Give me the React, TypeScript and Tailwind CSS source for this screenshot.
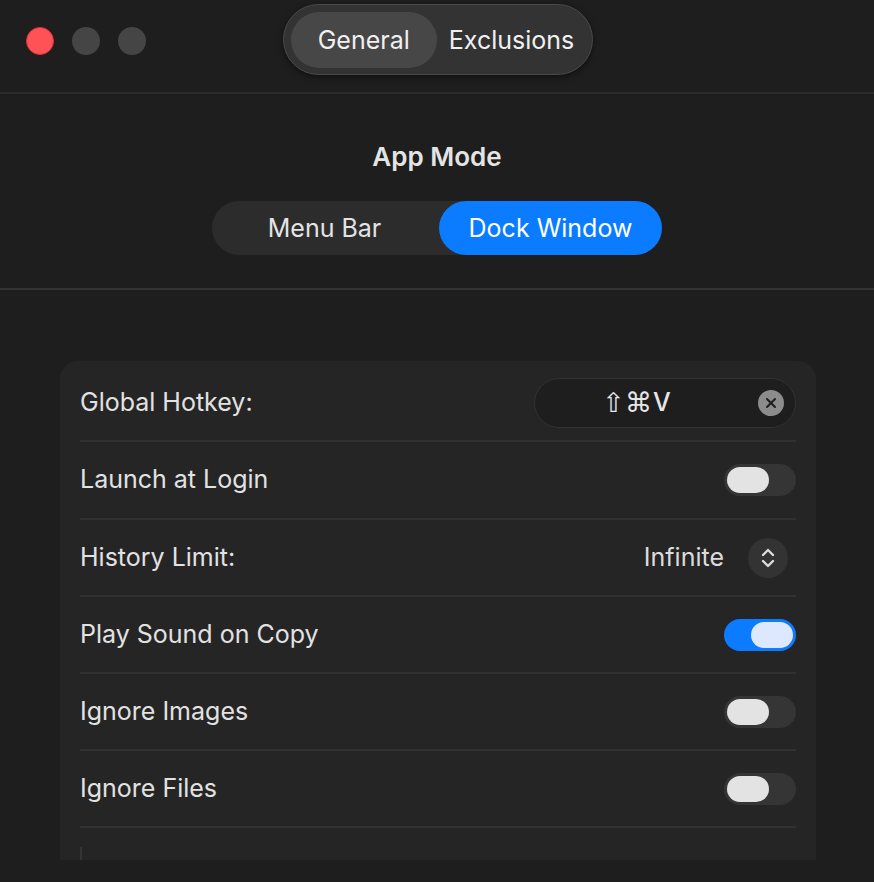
import React from "react";

function Toggle({ on }: { on?: boolean }) {
  return on ? (
    <div className="w-[72px] h-[32px] rounded-full bg-[#0b7bff] flex items-center justify-end px-[3px]">
      <div className="w-[42px] h-[26px] rounded-full bg-[#dde8ff]" />
    </div>
  ) : (
    <div className="w-[72px] h-[32px] rounded-full bg-[#353535] flex items-center justify-start px-[3px]">
      <div className="w-[42px] h-[26px] rounded-full bg-[#e3e3e3]" />
    </div>
  );
}

function Sep() {
  return <div className="mx-[20px] h-[2px] bg-[#313131]" />;
}

function Row({ label, children, h = "h-[75px]" }: { label: string; children?: React.ReactNode; h?: string }) {
  return (
    <div className={`${h} px-[20px] flex items-center justify-between`}>
      <span className="text-[25px] text-[#e2e2e2]">{label}</span>
      {children}
    </div>
  );
}

export default function App() {
  return (
    <div
      className="w-[874px] h-[882px] bg-[#1e1e1e] overflow-hidden"
      style={{ fontFamily: "Inter, 'DejaVu Sans', sans-serif" }}
    >
      {/* Title bar */}
      <div className="h-[92px] grid grid-cols-[1fr_auto_1fr] items-center">
        <div className="flex items-center gap-[18px] pl-[26px] pb-[11px]">
          <div className="w-[28px] h-[28px] rounded-full bg-[#ff5257] border border-[#e0303a]" />
          <div className="w-[28px] h-[28px] rounded-full bg-[#454545]" />
          <div className="w-[28px] h-[28px] rounded-full bg-[#454545]" />
        </div>
        <div className="pb-[13px] pl-[2px]">
          <div className="h-[71px] rounded-full bg-[#333333] border border-[#4a4a4a] shadow-[0_2px_6px_rgba(0,0,0,0.5)] flex items-center pl-[7px] pr-[18px]">
            <div className="h-[56px] w-[146px] rounded-full bg-[#474747] flex items-center justify-center text-[25px] text-[#f0f0f0] pt-[3px]">
              General
            </div>
            <div className="pl-[12px] text-[25px] text-[#f0f0f0] pt-[3px]">Exclusions</div>
          </div>
        </div>
        <div />
      </div>
      <div className="h-[2px] bg-[#2a2a2a]" />

      {/* App Mode */}
      <div className="h-[194px] flex flex-col items-center pt-[46px]">
        <div className="text-[26px] font-semibold text-[#e4e4e4] leading-[34px]">App Mode</div>
        <div className="mt-[27px] w-[450px] h-[54px] rounded-full bg-[#2c2c2c] flex items-center">
          <div className="flex-1 h-full flex items-center justify-center text-[25px] text-[#e4e4e4] pr-[2px] pt-[2px]">
            Menu Bar
          </div>
          <div className="w-[223px] h-full rounded-full bg-[#0b7bff] flex items-center justify-center text-[25px] text-white pt-[2px]">
            Dock Window
          </div>
        </div>
      </div>
      <div className="h-[2px] bg-[#333333]" />

      {/* Settings card */}
      <div className="pt-[71px] pl-[60px]">
        <div className="w-[756px] bg-[#252525] rounded-t-[18px] pt-[4px] h-[499px] overflow-hidden">
          <Row label="Global Hotkey:">
            <div className="w-[262px] h-[50px] rounded-full bg-[#1e1e1e] border border-[#333333] flex items-center pl-[20px] pr-[11px]">
              <div className="flex-1 flex items-center justify-center pr-[40px] text-[#e6e6e6]">
                <span className="text-[27px] leading-none" style={{ fontFamily: "'DejaVu Sans', sans-serif" }}>
                  ⇧⌘
                </span>
                <span className="text-[25px] font-medium leading-none ml-[1px]">V</span>
              </div>
              <div className="w-[26px] h-[26px] rounded-full bg-[#8c8c8c] flex items-center justify-center">
                <svg width="12" height="12" viewBox="0 0 12 12">
                  <path d="M2 2 L10 10 M10 2 L2 10" stroke="#1e1e1e" strokeWidth="2" strokeLinecap="round" />
                </svg>
              </div>
            </div>
          </Row>
          <Sep />
          <Row label="Launch at Login" h="h-[76px]">
            <Toggle />
          </Row>
          <Sep />
          <Row label="History Limit:">
            <div className="flex items-center gap-[24px]">
              <span className="text-[25px] text-[#dcdcdc]">Infinite</span>
              <div className="w-[40px] h-[40px] rounded-full bg-[#333333] flex items-center justify-center mr-[8px]">
                <svg width="16" height="22" viewBox="0 0 16 22" fill="none">
                  <path d="M3 8 L8 3 L13 8" stroke="#dcdcdc" strokeWidth="2.4" strokeLinecap="round" strokeLinejoin="round" />
                  <path d="M3 14 L8 19 L13 14" stroke="#dcdcdc" strokeWidth="2.4" strokeLinecap="round" strokeLinejoin="round" />
                </svg>
              </div>
            </div>
          </Row>
          <Sep />
          <Row label="Play Sound on Copy">
            <Toggle on />
          </Row>
          <Sep />
          <Row label="Ignore Images">
            <Toggle />
          </Row>
          <Sep />
          <Row label="Ignore Files">
            <Toggle />
          </Row>
          <Sep />
          <div className="px-[20px] pt-[19px]">
            <div className="w-[2px] h-[20px] bg-[#343434]" />
          </div>
        </div>
      </div>
    </div>
  );
}
